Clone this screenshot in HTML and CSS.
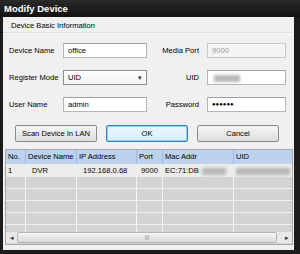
FILE: index.html
```html
<!DOCTYPE html>
<html>
<head>
<meta charset="utf-8">
<link rel="stylesheet" href="styles.css">
</head>
<body>
<div class="win">
  <div class="title">Modify Device</div>
  <div class="body">
    <div class="group-title">Device Basic Information</div>
    <div class="form">
      <div class="lbl">Device Name</div>
      <div class="inp">office</div>
      <div class="lbl r">Media Port</div>
      <div class="inp dis">9000</div>

      <div class="lbl">Register Mode</div>
      <div class="inp sel">UID<span class="arrow">&#9662;</span></div>
      <div class="lbl r">UID</div>
      <div class="inp"><span class="blur w28"></span></div>

      <div class="lbl">User Name</div>
      <div class="inp">admin</div>
      <div class="lbl r">Password</div>
      <div class="inp pw">&#9679;&#9679;&#9679;&#9679;&#9679;&#9679;</div>
    </div>
    <div class="buttons">
      <div class="btn">Scan Device In LAN</div>
      <div class="btn ok">OK</div>
      <div class="btn">Cancel</div>
    </div>
    <div class="table">
      <div class="row head">
        <div class="c c1">No.</div>
        <div class="c c2">Device Name</div>
        <div class="c c3">IP Address</div>
        <div class="c c4">Port</div>
        <div class="c c5">Mac Addr</div>
        <div class="c c6">UID</div>
      </div>
      <div class="row data">
        <div class="c c1">1</div>
        <div class="c c2">DVR</div>
        <div class="c c3">192.168.0.68</div>
        <div class="c c4">9000</div>
        <div class="c c5">EC:71:DB<span class="blur w24"></span></div>
        <div class="c c6"><span class="blur w54"></span></div>
      </div>
      <div class="rows">
        <div class="row empty"><div class="c c1"></div><div class="c c2"></div><div class="c c3"></div><div class="c c4"></div><div class="c c5"></div><div class="c c6"></div></div>
        <div class="row empty"><div class="c c1"></div><div class="c c2"></div><div class="c c3"></div><div class="c c4"></div><div class="c c5"></div><div class="c c6"></div></div>
        <div class="row empty"><div class="c c1"></div><div class="c c2"></div><div class="c c3"></div><div class="c c4"></div><div class="c c5"></div><div class="c c6"></div></div>
        <div class="row empty"><div class="c c1"></div><div class="c c2"></div><div class="c c3"></div><div class="c c4"></div><div class="c c5"></div><div class="c c6"></div></div>
        <div class="row empty"><div class="c c1"></div><div class="c c2"></div><div class="c c3"></div><div class="c c4"></div><div class="c c5"></div><div class="c c6"></div></div>
      </div>
      <div class="scroll">
        <div class="sarrow">&#9666;</div>
        <div class="thumb"><span class="grip">|||</span></div>
        <div class="strack"></div>
        <div class="sarrow">&#9656;</div>
      </div>
    </div>
  </div>
</div>
</body>
</html>
```
FILE: styles.css
```css
html, body {
  margin: 0;
  padding: 0;
  background: #1a1a1a;
}
body {
  font-family: "Liberation Sans", Arial, sans-serif;
  font-size: 7.6px;
  color: #000;
}
.win {
  width: 300px;
  height: 254px;
  display: flex;
  flex-direction: column;
  background: #1c1c1c;
}
.title {
  height: 17px;
  line-height: 17px;
  padding-left: 4px;
  color: #fff;
  font-weight: bold;
  font-size: 9.5px;
  background: linear-gradient(#2a2a2a, #121212);
}
.body {
  flex: 1;
  margin: 0 6px 4px 3px;
  background: #f0f0f0;
  display: flex;
  flex-direction: column;
}
.group-title {
  padding: 3px 0 0 8px;
  height: 12px;
  line-height: 12px;
  border-bottom: 1px solid #dedede;
  box-shadow: 0 1px 0 #fafafa;
  margin-right: 2px;
}
.form {
  display: grid;
  grid-template-columns: 54px 84px 60px 79px;
  row-gap: 12px;
  padding: 10px 0 0 6px;
  align-items: center;
}
.lbl.r {
  text-align: right;
  padding-right: 8px;
}
.inp {
  height: 13px;
  line-height: 13px;
  border: 1px solid #b4b6bc;
  border-top-color: #a0a0a0;
  background: #fff;
  padding-left: 4px;
  position: relative;
}
.inp.dis {
  background: #f4f4f4;
  color: #9a9a9a;
  border-color: #c8c8c8;
}
.inp.sel {
  background: linear-gradient(#ffffff, #f2f2f2);
  border-color: #8e8f8f;
}
.arrow {
  position: absolute;
  right: 4px;
  top: 0;
  font-size: 7px;
  color: #333;
}
.inp.pw {
  font-size: 6px;
}
.blur {
  display: inline-block;
  height: 7px;
  background: #b8b8b8;
  filter: blur(1.5px);
  vertical-align: middle;
}
.w28 { width: 26px; margin-left: 2px; }
.w24 { width: 24px; margin-left: 3px; }
.w54 { width: 54px; }
.buttons {
  display: flex;
  gap: 9px;
  padding: 13px 0 0 12px;
}
.btn {
  width: 80px;
  height: 15px;
  line-height: 15px;
  text-align: center;
  border: 1px solid #8a8a8a;
  border-radius: 2px;
  background: linear-gradient(#f6f6f6, #dddddd);
}
.btn.ok {
  border-color: #3c7fb1;
  background: linear-gradient(#eaf6fd, #d7effc);
  box-shadow: inset 0 0 0 1px #8fd0f4;
}
.table {
  margin: 7px 1px 0 2px;
  border: 1px solid #a8a8a8;
  background: #d3d3d3;
  display: flex;
  flex-direction: column;
  height: 94px;
}
.row {
  display: flex;
  height: 13px;
  line-height: 13px;
}
.c {
  box-sizing: border-box;
  padding-left: 2px;
  white-space: nowrap;
  overflow: hidden;
  border-right: 1px solid #f4f4f4;
}
.c1 { width: 20px; }
.c2 { width: 51px; }
.c3 { width: 60px; }
.c4 { width: 26px; }
.c5 { width: 71px; }
.c6 { width: 57px; border-right: none; }
.row.head {
  background: #bcd2ef;
  height: 14px;
  line-height: 14px;
}
.row.head .c {
  border-right-color: #9fb9dc;
}
.row.data {
  background: #ececec;
}
.row.data .c {
  border-right-color: #ececec;
}
.row.data .c2 { padding-left: 6px; }
.row.data .c3 { padding-left: 6px; }
.row.data .c4 { padding-left: 4px; }
.rows {
  flex: 1;
  overflow: hidden;
}
.row.empty {
  height: 11px;
  border-bottom: 1px solid #f2f2f2;
}
.scroll {
  display: flex;
  height: 11px;
  margin: 0 0 1px 0;
  background: #e8e8e8;
}
.sarrow {
  width: 11px;
  font-size: 7px;
  line-height: 11px;
  text-align: center;
  color: #333;
}
.thumb {
  width: 260px;
  background: linear-gradient(#f6f6f6, #dadada);
  border: 1px solid #b5b5b5;
  box-sizing: border-box;
  border-radius: 2px;
  text-align: center;
  font-size: 6px;
  line-height: 9px;
  color: #888;
}
.strack {
  flex: 1;
}
```
